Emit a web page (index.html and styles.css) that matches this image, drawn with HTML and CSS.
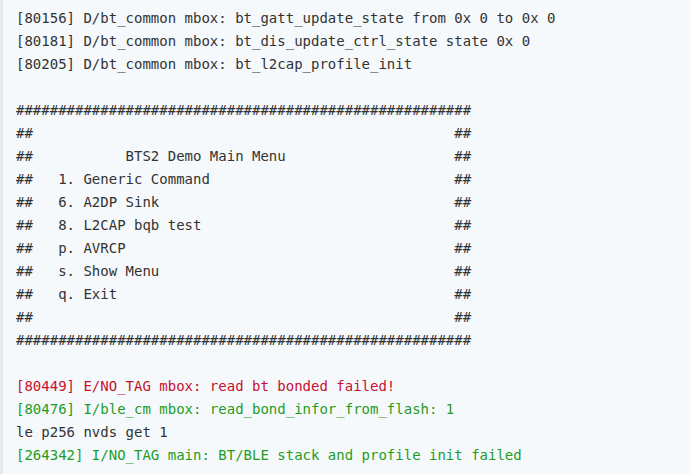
FILE: index.html
```html
<!DOCTYPE html>
<html>
<head>
<meta charset="utf-8">
<link rel="stylesheet" href="styles.css">
</head>
<body>
<div class="code"><pre class="log"><span class="d">[80156] D/bt_common mbox: bt_gatt_update_state from 0x 0 to 0x 0</span>
<span class="d">[80181] D/bt_common mbox: bt_dis_update_ctrl_state state 0x 0</span>
<span class="d">[80205] D/bt_common mbox: bt_l2cap_profile_init</span>

######################################################
##                                                  ##
##           BTS2 Demo Main Menu                    ##
##   1. Generic Command                             ##
##   6. A2DP Sink                                   ##
##   8. L2CAP bqb test                              ##
##   p. AVRCP                                       ##
##   s. Show Menu                                   ##
##   q. Exit                                        ##
##                                                  ##
######################################################

<span class="err">[80449] E/NO_TAG mbox: read bt bonded failed!</span>
<span class="info">[80476] I/ble_cm mbox: read_bond_infor_from_flash: 1</span>
le p256 nvds get 1
<span class="info">[264342] I/NO_TAG main: BT/BLE stack and profile init failed</span></pre></div>
</body>
</html>
```
FILE: styles.css
```css
html, body {
  margin: 0;
  padding: 0;
  background: #f5f9fc;
}
.code {
  height: 474px;
  box-sizing: border-box;
  border-left: 3px solid #e4e9ed;
  background: #f5f9fc;
  padding: 7px 0 0 13px;
  overflow: hidden;
}
.log {
  margin: 0;
  font-family: "DejaVu Sans Mono", "Liberation Mono", monospace;
  font-size: 14px;
  line-height: 23px;
  color: #333333;
}
.err {
  color: #c8102e;
}
.info {
  color: #1f9c1f;
}
```
